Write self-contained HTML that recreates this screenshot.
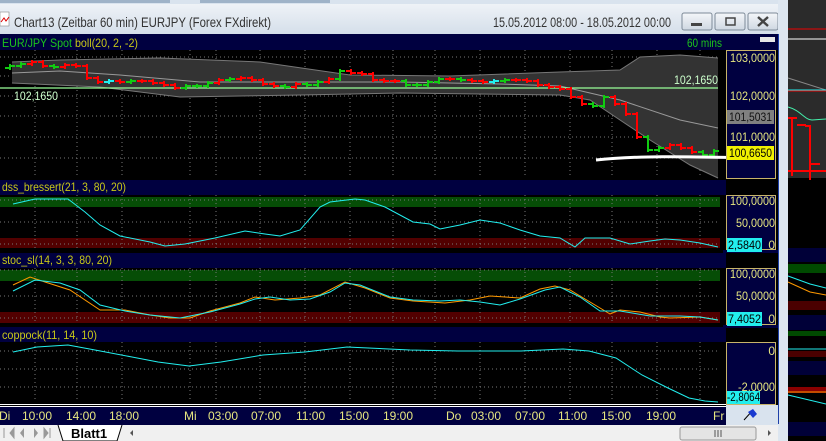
<!DOCTYPE html>
<html><head><meta charset="utf-8"><style>
html,body{margin:0;padding:0;width:826px;height:441px;overflow:hidden;background:#d9e3ee;font-family:"Liberation Sans",sans-serif}
</style></head><body>
<svg id="s" width="826" height="441" xmlns="http://www.w3.org/2000/svg" style="position:absolute;left:0;top:0;font-family:'Liberation Sans',sans-serif">
<defs><linearGradient id="tb" x1="0" y1="0" x2="0" y2="1"><stop offset="0" stop-color="#eef2f7"/><stop offset="1" stop-color="#d5dfea"/></linearGradient>
<linearGradient id="btn" x1="0" y1="0" x2="0" y2="1"><stop offset="0" stop-color="#f4f6f9"/><stop offset="1" stop-color="#cfd8e2"/></linearGradient></defs>
<rect x="0" y="0" width="826" height="441" fill="#d9e3ee"/>
<rect x="0" y="0" width="170" height="3" fill="#9fb3c8"/><rect x="200" y="0" width="130" height="3" fill="#9fb3c8"/>
<rect x="0" y="4" width="780" height="30" fill="url(#tb)"/>
<rect x="0" y="12" width="9" height="14" fill="#fff" stroke="#888" stroke-width="0.6"/><path d="M1 22 L4 18 L6 21 L9 17" stroke="#d00" fill="none" stroke-width="1"/>
<text x="14" y="27" font-size="14" fill="#333" textLength="257" lengthAdjust="spacingAndGlyphs">Chart13 (Zeitbar 60 min)  EURJPY (Forex FXdirekt)</text>
<text x="493" y="27" font-size="14" fill="#333" textLength="178" lengthAdjust="spacingAndGlyphs">15.05.2012 08:00 - 18.05.2012 00:00</text>
<g stroke="#7d8a98" fill="url(#btn)"><rect x="682" y="13" width="30" height="17" rx="2"/><rect x="715" y="13" width="30" height="17" rx="2"/><rect x="748" y="13" width="30" height="17" rx="2"/></g>
<rect x="691" y="23" width="11" height="3" fill="#444"/><rect x="726" y="18" width="9" height="7" fill="none" stroke="#444" stroke-width="1.5"/>
<path d="M758 17 L768 26 M768 17 L758 26" stroke="#444" stroke-width="2.4"/>
<!-- right neighbour -->
<rect x="778" y="0" width="10" height="441" fill="#dde6f0"/><rect x="777" y="34" width="2" height="390" fill="#1d3fa8"/>
<rect x="788" y="0" width="38" height="441" fill="#000"/>
<rect x="788" y="0" width="38" height="178" fill="#2b2b2b"/>
<path d="M788 29H826" stroke="#e00" /><path d="M788 39H826" stroke="#fff"/><path d="M788 78 L826 90" stroke="#888"/><path d="M788 90H826" stroke="#2ee"/><path d="M788 91H826" stroke="#e00"/>
<path d="M788 107 C800 110 805 120 812 120 L826 119" stroke="#4ea" fill="none"/>
<path d="M792 117 V176 M788 118H797 M797 125H806 M810 126V180 M805 126H811 M810 164H820 M788 171H826" stroke="#f00" stroke-width="2" fill="none"/>
<rect x="788" y="248" width="38" height="14" fill="#000038"/><rect x="788" y="264" width="38" height="9" fill="#004a00"/><rect x="788" y="301" width="38" height="9" fill="#4a0000"/>
<path d="M788 276 L810 284 L826 288" stroke="#2ee" fill="none"/><path d="M788 282 L810 292 L826 295" stroke="#f90" fill="none"/>
<rect x="788" y="315" width="38" height="15" fill="#000038"/><rect x="788" y="331" width="38" height="5" fill="#004a00"/><rect x="788" y="351" width="38" height="6" fill="#4a0000"/><path d="M788 349H826" stroke="#2ee"/>
<rect x="788" y="361" width="38" height="14" fill="#000038"/><rect x="788" y="387" width="38" height="6" fill="#8a0000"/><path d="M788 392 H826" stroke="#f90"/><path d="M788 395 L826 404" stroke="#2ee"/>
<rect x="788" y="422" width="38" height="14" fill="#000038"/>
<!-- main chart area -->
<rect x="0" y="34" width="778" height="373" fill="#000"/>
<rect x="0" y="34" width="778" height="16" fill="#000040"/>
<rect x="760" y="37" width="15" height="5" fill="#e6e6e6"/>
<text x="2" y="47" font-size="12" fill="#1cc51c" textLength="136" lengthAdjust="spacingAndGlyphs">EUR/JPY Spot <tspan fill="#c8c818">boll(20, 2, -2)</tspan></text>
<text x="687" y="47" font-size="12" fill="#1cc51c" textLength="35" lengthAdjust="spacingAndGlyphs">60 mins</text>
<rect x="0" y="180" width="726" height="15" fill="#000040"/>
<text x="2" y="191" font-size="12" fill="#c8c818" textLength="124" lengthAdjust="spacingAndGlyphs">dss_bressert(21, 3, 80, 20)</text>
<rect x="0" y="253" width="726" height="15" fill="#000040"/>
<text x="2" y="264" font-size="12" fill="#c8c818" textLength="110" lengthAdjust="spacingAndGlyphs">stoc_sl(14, 3, 3, 80, 20)</text>
<rect x="0" y="327" width="726" height="15" fill="#000040"/>
<text x="2" y="339" font-size="12" fill="#c8c818" textLength="95" lengthAdjust="spacingAndGlyphs">coppock(11, 14, 10)</text>
<rect x="723" y="250" width="55" height="3" fill="#000040"/><rect x="723" y="325" width="55" height="3" fill="#000040"/>
<rect x="0" y="197" width="720" height="10" fill="#064d06"/><rect x="0" y="238" width="720" height="10" fill="#520000"/>
<rect x="0" y="270" width="720" height="11" fill="#064d06"/><rect x="0" y="312" width="720" height="11" fill="#520000"/>
<g id="grid" stroke="#777" stroke-dasharray="1,3" stroke-width="1"></g>
<!-- bollinger -->
<path d="M12 62 L60 60 L160 58 L260 62 L350 75 L450 76 L560 72 L620 70 L640 57 L680 55 L718 58 L718 178 L690 165 L650 140 L620 120 L590 100 L560 95 L480 94 L400 93 L300 95 L180 97 L100 87 L12 83 Z" fill="#333"/>
<path d="M12 62 L60 60 L160 58 L260 62 L350 75 L450 76 L560 72 L620 70 L640 57 L680 55 L718 58" stroke="#777" fill="none"/>
<path d="M12 83 L100 87 L180 97 L300 95 L400 93 L480 94 L560 95 L590 100 L620 120 L650 140 L690 165 L718 178" stroke="#777" fill="none"/>
<path d="M12 73 L60 71 L120 75 L200 82 L300 82 L400 82 L500 84 L560 86 L620 100 L680 120 L718 128" stroke="#999" fill="none"/>
<path d="M0 88 H718" stroke="#9f9" stroke-width="1.2"/>
<text x="14" y="100" font-size="12" fill="#cfc" textLength="44" lengthAdjust="spacingAndGlyphs">102,1650</text>
<text x="674" y="84" font-size="12" fill="#cfc" textLength="44" lengthAdjust="spacingAndGlyphs">102,1650</text>
<g id="bars" stroke-width="2" fill="none"></g>
<path d="M596 160 C640 155 700 157 752 158" stroke="#fff" stroke-width="3" fill="none"/>
<!-- indicators -->
<polyline id="dss" fill="none" stroke="#2ee" stroke-width="1"/>
<polyline id="sto" fill="none" stroke="#f90" stroke-width="1"/>
<polyline id="stc" fill="none" stroke="#2ee" stroke-width="1"/>
<polyline id="cop" fill="none" stroke="#2ee" stroke-width="1"/>
<!-- axes -->
<g stroke="#c8b46a" fill="#000040"><rect x="726.5" y="50.5" width="49" height="128"/><rect x="726.5" y="195.5" width="49" height="54"/><rect x="726.5" y="268.5" width="49" height="56"/><rect x="726.5" y="342.5" width="49" height="62"/></g>
<g font-size="12" fill="#e6e680" text-anchor="end" lengthAdjust="spacingAndGlyphs">
<text x="775" y="62" textLength="45" lengthAdjust="spacingAndGlyphs">103,0000</text><text x="775" y="100" textLength="45" lengthAdjust="spacingAndGlyphs">102,0000</text><text x="775" y="141" textLength="45" lengthAdjust="spacingAndGlyphs">101,0000</text>
<text x="775" y="205" textLength="45" lengthAdjust="spacingAndGlyphs">100,0000</text><text x="775" y="227" textLength="39" lengthAdjust="spacingAndGlyphs">50,0000</text><text x="775" y="249">0</text>
<text x="775" y="278" textLength="45" lengthAdjust="spacingAndGlyphs">100,0000</text><text x="775" y="300" textLength="39" lengthAdjust="spacingAndGlyphs">50,0000</text><text x="775" y="323">0</text>
<text x="775" y="355">0</text><text x="775" y="391" textLength="37" lengthAdjust="spacingAndGlyphs">-2,0000</text></g>
<rect x="727" y="110" width="47" height="14" fill="#808080"/><text x="729" y="121" font-size="12" fill="#111" textLength="43" lengthAdjust="spacingAndGlyphs">101,5031</text>
<rect x="727" y="146" width="47" height="14" fill="#f0f000"/><text x="729" y="157" font-size="12" fill="#000" textLength="43" lengthAdjust="spacingAndGlyphs">100,6650</text>
<rect x="727" y="238" width="35" height="14" fill="#2ee"/><text x="728" y="249" font-size="12" fill="#000" textLength="33" lengthAdjust="spacingAndGlyphs">2,5840</text>
<rect x="727" y="312" width="35" height="14" fill="#2ee"/><text x="728" y="323" font-size="12" fill="#000" textLength="33" lengthAdjust="spacingAndGlyphs">7,4052</text>
<rect x="727" y="391" width="33" height="13" fill="#2ee"/><text x="727" y="401" font-size="12" fill="#000" textLength="33" lengthAdjust="spacingAndGlyphs">-2,8064</text>
<!-- time axis -->
<rect x="0" y="404" width="726" height="1" fill="#fff"/><rect x="0" y="406" width="726" height="1" fill="#fff"/>
<rect x="0" y="407" width="726" height="18" fill="#000040"/>
<g font-size="12" fill="#e6e680">
<text x="-1" y="420">Di</text><text x="22" y="420">10:00</text><text x="66" y="420">14:00</text><text x="109" y="420">18:00</text>
<text x="184" y="420">Mi</text><text x="208" y="420">03:00</text><text x="251" y="420">07:00</text><text x="296" y="420">11:00</text><text x="339" y="420">15:00</text><text x="383" y="420">19:00</text>
<text x="446" y="420">Do</text><text x="471" y="420">03:00</text><text x="515" y="420">07:00</text><text x="558" y="420">11:00</text><text x="601" y="420">15:00</text><text x="646" y="420">19:00</text><text x="713" y="420">Fr</text></g>
<rect x="726" y="405" width="52" height="20" fill="#d9e3ee"/>
<path d="M744 420 L753 410" stroke="#000" stroke-width="1"/><path d="M748 412 L753 409 L757 414 L753 418 Z" fill="#1a3ad0"/>
<!-- tab bar -->
<rect x="0" y="425" width="778" height="16" fill="#f0f0f0"/>
<g fill="#999"><path d="M4 428 V438 M10 433 L14 428 V438Z" stroke="#999"/><path d="M20 433 L24 428 V438Z"/><path d="M34 428 L38 433 L34 438Z"/><path d="M44 428 L48 433 L44 438Z M50 428V438" stroke="#999"/></g>
<path d="M58 425 L63 441 H117 L122 425" fill="#fff" stroke="#000"/>
<text x="71" y="438" font-size="13" font-weight="bold" fill="#000">Blatt1</text>
<path d="M133 430 L130 433 L133 436Z" fill="#555"/>
<rect x="680" y="427" width="76" height="13" rx="2" fill="#e4e4e4" stroke="#999"/><path d="M715 430V437 M718 430V437 M721 430V437" stroke="#555"/>
<path d="M768 430 L771 433 L768 436Z" fill="#555"/>
</svg>
<script>
var s=document.getElementById('s'),NS='http://www.w3.org/2000/svg';
function el(p,t,a){var e=document.createElementNS(NS,t);for(var k in a)e.setAttribute(k,a[k]);p.appendChild(e);return e;}
var g=document.getElementById('grid');
var vx=[35,77,122,190,216,260,305,350,393,435,480,525,570,612,657,700];
var panels=[[50,178,[57,76,96,116,137,158]],[195,248,[200,222,244]],[268,323,[270,296,318]],[342,402,[351,369,387]]];
panels.forEach(function(p){vx.forEach(function(x){el(g,'line',{x1:x,y1:p[0],x2:x,y2:p[1]});});p[2].forEach(function(y){el(g,'line',{x1:0,y1:y,x2:720,y2:y});});});
var b=document.getElementById('bars');
var d=[[10,66,'g'],[21,64,'g'],[32,62,'r'],[43,66,'r'],[54,67,'g'],[65,65,'r'],[76,66,'r'],[87,78,'r'],[98,82,'r'],[109,81,'c'],[120,82,'r'],[131,81,'g'],[142,81,'r'],[153,83,'r'],[164,85,'r'],[175,88,'r'],[186,86,'g'],[197,86,'g'],[208,83,'g'],[219,80,'r'],[230,79,'g'],[241,78,'r'],[252,80,'r'],[263,84,'r'],[274,86,'r'],[285,87,'g'],[296,84,'r'],[307,85,'g'],[318,82,'g'],[329,79,'r'],[340,71,'g'],[351,73,'r'],[362,74,'r'],[373,80,'r'],[384,81,'r'],[395,81,'r'],[406,85,'g'],[417,85,'g'],[428,82,'g'],[439,79,'g'],[450,79,'r'],[461,80,'g'],[472,81,'r'],[483,82,'r'],[494,81,'c'],[505,80,'g'],[516,80,'r'],[527,81,'r'],[538,85,'r'],[549,87,'r'],[560,89,'r'],[571,97,'r'],[582,104,'r'],[593,106,'g'],[604,97,'g'],[615,104,'r'],[626,114,'r'],[637,137,'r'],[648,150,'g'],[659,148,'g'],[670,145,'r'],[681,148,'r'],[692,152,'r'],[703,155,'g'],[714,151,'g']];
var col={g:'#1c1',r:'#f00',c:'#2ee'},prev=68;
d.forEach(function(v){var c=col[v[2]],lo=Math.min(prev,v[1])-2,hi=Math.max(prev,v[1])+2;
el(b,'path',{d:'M'+v[0]+' '+lo+'V'+hi+'M'+(v[0]-5)+' '+prev+'H'+v[0]+'M'+v[0]+' '+v[1]+'H'+(v[0]+5),stroke:c});prev=v[1];});
function pl(id,a){document.getElementById(id).setAttribute('points',a.map(function(p){return p.join(',')}).join(' '));}
pl('dss',[[13,204],[35,199],[68,199],[85,212],[100,225],[120,236],[150,242],[165,246],[185,244],[215,238],[245,231],[265,234],[280,236],[300,230],[320,207],[330,202],[355,199],[365,200],[385,207],[413,222],[430,224],[440,229],[460,225],[480,220],[500,223],[520,230],[540,236],[560,238],[575,247],[585,238],[610,238],[630,244],[650,241],[665,239],[680,240],[700,243],[718,247]]);
pl('sto',[[13,285],[30,277],[45,282],[70,290],[100,310],[125,310],[150,315],[170,318],[190,318],[210,311],[240,303],[255,297],[275,300],[300,298],[320,295],[345,282],[365,288],[390,298],[413,301],[445,303],[470,300],[490,296],[520,298],[540,289],[555,286],[570,290],[595,305],[610,314],[620,310],[640,312],[660,317],[670,318],[700,317],[718,320]]);
pl('stc',[[13,291],[35,280],[60,283],[80,290],[100,305],[125,311],[150,315],[180,318],[210,312],[240,304],[255,299],[270,297],[290,300],[310,299],[330,292],[345,283],[360,285],[390,297],[413,300],[440,301],[460,300],[480,302],[500,305],[520,299],[545,290],[560,287],[580,297],[600,311],[620,311],[650,316],[680,316],[700,317],[718,320]]);
pl('cop',[[13,352],[37,347],[68,345],[95,350],[132,357],[158,362],[189,366],[221,362],[263,355],[305,352],[347,347],[410,350],[458,351],[521,351],[563,349],[589,351],[616,358],[642,375],[668,388],[689,398],[705,401],[718,402]]);
</script>
</body></html>
